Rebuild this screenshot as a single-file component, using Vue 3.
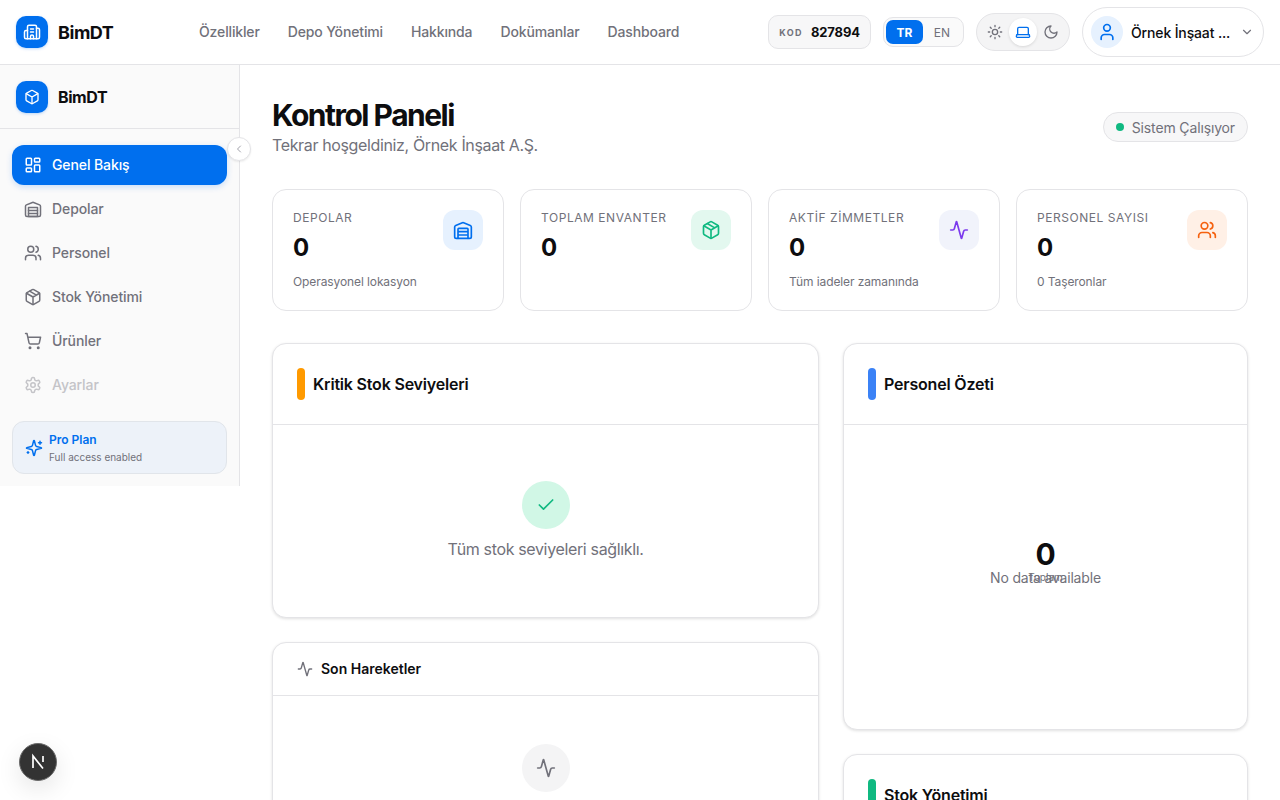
<template>
  <div class="app">
    <header class="topbar">
      <div class="brand">
        <span class="logo">
          <svg viewBox="0 0 24 24" class="ic-18"><path d="M10 12h4M10 8h4M14 21v-3a2 2 0 0 0-4 0v3" /><path d="M6 10H4a2 2 0 0 0-2 2v7a2 2 0 0 0 2 2h16a2 2 0 0 0 2-2V9a2 2 0 0 0-2-2h-2" /><path d="M6 21V5a2 2 0 0 1 2-2h8a2 2 0 0 1 2 2v16" /></svg>
        </span>
        <span class="brand-name">BimDT</span>
      </div>
      <nav class="topnav">
        <a v-for="link in links" :key="link">{{ link }}</a>
      </nav>
      <div class="tools">
        <div class="code"><span class="code-label">KOD</span><span class="code-value">827894</span></div>
        <div class="lang"><span class="lang-on">TR</span><span class="lang-off">EN</span></div>
        <div class="theme">
          <span class="theme-btn">
            <svg viewBox="0 0 24 24" class="ic-16"><circle cx="12" cy="12" r="4" /><path d="M12 2v2M12 20v2M4.9 4.9l1.4 1.4M17.7 17.7l1.4 1.4M2 12h2M20 12h2M6.3 17.7l-1.4 1.4M19.1 4.9l-1.4 1.4" /></svg>
          </span>
          <span class="theme-btn active">
            <svg viewBox="0 0 24 24" class="ic-16"><path d="M20 16V7a2 2 0 0 0-2-2H6a2 2 0 0 0-2 2v9" /><path d="M2.5 16h19l.4 2a1.5 1.5 0 0 1-1.4 2h-17A1.5 1.5 0 0 1 2.1 18Z" /></svg>
          </span>
          <span class="theme-btn">
            <svg viewBox="0 0 24 24" class="ic-16"><path d="M12 3a6 6 0 0 0 9 9 9 9 0 1 1-9-9Z" /></svg>
          </span>
        </div>
        <div class="user">
          <span class="avatar">
            <svg viewBox="0 0 24 24" class="ic-20"><path d="M19 21v-2a4 4 0 0 0-4-4H9a4 4 0 0 0-4 4v2" /><circle cx="12" cy="7" r="4" /></svg>
          </span>
          <span class="user-name">Örnek İnşaat ...</span>
          <svg viewBox="0 0 24 24" class="ic-14 chevron"><path d="m6 9 6 6 6-6" /></svg>
        </div>
      </div>
    </header>

    <div class="body">
      <aside class="sidebar">
        <div class="side-brand">
          <span class="logo">
            <svg viewBox="0 0 24 24" class="ic-16"><path d="M21 8a2 2 0 0 0-1-1.73l-7-4a2 2 0 0 0-2 0l-7 4A2 2 0 0 0 3 8v8a2 2 0 0 0 1 1.73l7 4a2 2 0 0 0 2 0l7-4A2 2 0 0 0 21 16Z" /><path d="m3.3 7 8.7 5 8.7-5M12 22V12" /></svg>
          </span>
          <span class="side-name">BimDT</span>
        </div>
        <button class="collapse">
          <svg viewBox="0 0 24 24" class="ic-12"><path d="m15 18-6-6 6-6" /></svg>
        </button>
        <nav class="side-nav">
          <a class="side-link active">
            <svg viewBox="0 0 24 24" class="ic-18"><rect x="3" y="3" width="7" height="9" rx="1" /><rect x="14" y="3" width="7" height="5" rx="1" /><rect x="14" y="12" width="7" height="9" rx="1" /><rect x="3" y="16" width="7" height="5" rx="1" /></svg>
            <span>Genel Bakış</span>
          </a>
          <a class="side-link">
            <svg viewBox="0 0 24 24" class="ic-18"><path d="M22 8.35V20a2 2 0 0 1-2 2H4a2 2 0 0 1-2-2V8.35A2 2 0 0 1 3.26 6.5l8-3.2a2 2 0 0 1 1.48 0l8 3.2A2 2 0 0 1 22 8.35Z" /><path d="M6 18h12M6 14h12" /><rect x="6" y="10" width="12" height="12" /></svg>
            <span>Depolar</span>
          </a>
          <a class="side-link">
            <svg viewBox="0 0 24 24" class="ic-18"><path d="M16 21v-2a4 4 0 0 0-4-4H6a4 4 0 0 0-4 4v2" /><circle cx="9" cy="7" r="4" /><path d="M22 21v-2a4 4 0 0 0-3-3.87M16 3.13a4 4 0 0 1 0 7.75" /></svg>
            <span>Personel</span>
          </a>
          <a class="side-link">
            <svg viewBox="0 0 24 24" class="ic-18"><path d="M21 8a2 2 0 0 0-1-1.73l-7-4a2 2 0 0 0-2 0l-7 4A2 2 0 0 0 3 8v8a2 2 0 0 0 1 1.73l7 4a2 2 0 0 0 2 0l7-4A2 2 0 0 0 21 16Z" /><path d="m3.3 7 8.7 5 8.7-5M12 22V12M7.5 4.27l9 5.15" /></svg>
            <span>Stok Yönetimi</span>
          </a>
          <a class="side-link">
            <svg viewBox="0 0 24 24" class="ic-18"><circle cx="8" cy="21" r="1" /><circle cx="19" cy="21" r="1" /><path d="M2.05 2.05h2l2.66 12.42a2 2 0 0 0 2 1.58h9.78a2 2 0 0 0 1.95-1.57l1.65-7.43H5.12" /></svg>
            <span>Ürünler</span>
          </a>
          <a class="side-link muted">
            <svg viewBox="0 0 24 24" class="ic-18"><path d="M12.22 2h-.44a2 2 0 0 0-2 2v.18a2 2 0 0 1-1 1.73l-.43.25a2 2 0 0 1-2 0l-.15-.08a2 2 0 0 0-2.73.73l-.22.38a2 2 0 0 0 .73 2.73l.15.1a2 2 0 0 1 1 1.72v.51a2 2 0 0 1-1 1.74l-.15.09a2 2 0 0 0-.73 2.73l.22.38a2 2 0 0 0 2.73.73l.15-.08a2 2 0 0 1 2 0l.43.25a2 2 0 0 1 1 1.73V20a2 2 0 0 0 2 2h.44a2 2 0 0 0 2-2v-.18a2 2 0 0 1 1-1.73l.43-.25a2 2 0 0 1 2 0l.15.08a2 2 0 0 0 2.73-.73l.22-.39a2 2 0 0 0-.73-2.73l-.15-.08a2 2 0 0 1-1-1.74v-.5a2 2 0 0 1 1-1.74l.15-.09a2 2 0 0 0 .73-2.73l-.22-.38a2 2 0 0 0-2.73-.73l-.15.08a2 2 0 0 1-2 0l-.43-.25a2 2 0 0 1-1-1.73V4a2 2 0 0 0-2-2Z" /><circle cx="12" cy="12" r="3" /></svg>
            <span>Ayarlar</span>
          </a>
        </nav>
        <div class="plan">
          <svg viewBox="0 0 24 24" class="ic-18 plan-icon"><path d="M9.94 15.5A2 2 0 0 0 8.5 14.06l-6.14-1.58a.5.5 0 0 1 0-.96L8.5 9.94A2 2 0 0 0 9.94 8.5l1.58-6.14a.5.5 0 0 1 .96 0l1.58 6.14a2 2 0 0 0 1.44 1.44l6.14 1.58a.5.5 0 0 1 0 .96l-6.14 1.58a2 2 0 0 0-1.44 1.44l-1.58 6.14a.5.5 0 0 1-.96 0Z" /><path d="M20 3v4M22 5h-4M4 17v2M5 18H3" /></svg>
          <div>
            <div class="plan-name">Pro Plan</div>
            <div class="plan-sub">Full access enabled</div>
          </div>
        </div>
      </aside>

      <main class="main">
        <div class="page-head">
          <div>
            <h1>Kontrol Paneli</h1>
            <p>Tekrar hoşgeldiniz, Örnek İnşaat A.Ş.</p>
          </div>
          <div class="status"><i></i>Sistem Çalışıyor</div>
        </div>

        <section class="stats">
          <div v-for="s in stats" :key="s.label" class="stat">
            <div class="stat-text">
              <div class="stat-label">{{ s.label }}</div>
              <div class="stat-value">0</div>
              <div class="stat-sub">{{ s.sub }}</div>
            </div>
            <span class="stat-icon" :class="s.tone">
              <svg viewBox="0 0 24 24" class="ic-20"><path v-for="d in s.paths" :key="d" :d="d" /></svg>
            </span>
          </div>
        </section>

        <section class="columns">
          <div class="col">
            <div class="panel critical">
              <div class="panel-head tall">
                <span class="bar orange"></span>
                <h2>Kritik Stok Seviyeleri</h2>
              </div>
              <div class="empty ok">
                <span class="round green">
                  <svg viewBox="0 0 24 24" class="ic-20"><path d="M20 6 9 17l-5-5" /></svg>
                </span>
                <p>Tüm stok seviyeleri sağlıklı.</p>
              </div>
            </div>
            <div class="panel">
              <div class="panel-head short">
                <svg viewBox="0 0 24 24" class="ic-16 gray"><path d="M22 12h-2.48a2 2 0 0 0-1.93 1.46l-2.35 8.36a.25.25 0 0 1-.48 0L9.24 2.18a.25.25 0 0 0-.48 0l-2.35 8.36A2 2 0 0 1 4.49 12H2" /></svg>
                <h3>Son Hareketler</h3>
              </div>
              <div class="empty recent">
                <span class="round light">
                  <svg viewBox="0 0 24 24" class="ic-20 gray"><path d="M22 12h-2.48a2 2 0 0 0-1.93 1.46l-2.35 8.36a.25.25 0 0 1-.48 0L9.24 2.18a.25.25 0 0 0-.48 0l-2.35 8.36A2 2 0 0 1 4.49 12H2" /></svg>
                </span>
              </div>
            </div>
          </div>

          <div class="col">
            <div class="panel people">
              <div class="panel-head tall">
                <span class="bar blue"></span>
                <h2>Personel Özeti</h2>
              </div>
              <div class="chart">
                <span class="no-data">No data available</span>
                <div class="chart-center">
                  <strong>0</strong>
                  <small>Toplam</small>
                </div>
              </div>
            </div>
            <div class="panel">
              <div class="panel-head tall">
                <span class="bar green-bar"></span>
                <h2>Stok Yönetimi</h2>
              </div>
            </div>
          </div>
        </section>
      </main>
    </div>

    <button class="dev-badge">
      <svg viewBox="0 0 24 24" width="24" height="24"><path d="M7 18V6l10 12.5" /><path d="M17 6v6" /></svg>
    </button>
  </div>
</template>

<script setup>
const links = ['Özellikler', 'Depo Yönetimi', 'Hakkında', 'Dokümanlar', 'Dashboard']

const stats = [
  {
    label: 'DEPOLAR',
    sub: 'Operasyonel lokasyon',
    tone: 'blue',
    paths: [
      'M22 8.35V20a2 2 0 0 1-2 2H4a2 2 0 0 1-2-2V8.35A2 2 0 0 1 3.26 6.5l8-3.2a2 2 0 0 1 1.48 0l8 3.2A2 2 0 0 1 22 8.35Z',
      'M6 18h12M6 14h12M6 22V11a1 1 0 0 1 1-1h10a1 1 0 0 1 1 1v11'
    ]
  },
  {
    label: 'TOPLAM ENVANTER',
    sub: '',
    tone: 'green',
    paths: [
      'M21 8a2 2 0 0 0-1-1.73l-7-4a2 2 0 0 0-2 0l-7 4A2 2 0 0 0 3 8v8a2 2 0 0 0 1 1.73l7 4a2 2 0 0 0 2 0l7-4A2 2 0 0 0 21 16Z',
      'm3.3 7 8.7 5 8.7-5M12 22V12M7.5 4.27l9 5.15'
    ]
  },
  {
    label: 'AKTİF ZİMMETLER',
    sub: 'Tüm iadeler zamanında',
    tone: 'purple',
    paths: ['M22 12h-2.48a2 2 0 0 0-1.93 1.46l-2.35 8.36a.25.25 0 0 1-.48 0L9.24 2.18a.25.25 0 0 0-.48 0l-2.35 8.36A2 2 0 0 1 4.49 12H2']
  },
  {
    label: 'PERSONEL SAYISI',
    sub: '0 Taşeronlar',
    tone: 'orange',
    paths: [
      'M16 21v-2a4 4 0 0 0-4-4H6a4 4 0 0 0-4 4v2',
      'M13 7a4 4 0 1 1-8 0 4 4 0 0 1 8 0Z',
      'M22 21v-2a4 4 0 0 0-3-3.87M16 3.13a4 4 0 0 1 0 7.75'
    ]
  }
]
</script>

<style>
html, body {
  margin: 0;
  background: #fff;
  overflow: hidden;
}
</style>

<style scoped>
.app {
  height: 100vh;
  overflow: hidden;
  font-family: Inter, "Liberation Sans", sans-serif;
  color: #0d0d0f;
  position: relative;
}

svg {
  fill: none;
  stroke: currentColor;
  stroke-width: 2;
  stroke-linecap: round;
  stroke-linejoin: round;
  flex: none;
}
.ic-12 { width: 12px; height: 12px; }
.ic-14 { width: 14px; height: 14px; }
.ic-16 { width: 16px; height: 16px; }
.ic-18 { width: 18px; height: 18px; }
.ic-20 { width: 20px; height: 20px; }
.gray { color: #71717a; }

/* top bar */
.topbar {
  height: 64px;
  border-bottom: 1px solid #e4e4e7;
  display: flex;
  align-items: center;
  padding: 0 16px;
  background: #fff;
}
.brand {
  display: flex;
  align-items: center;
  gap: 10px;
  width: 183px;
}
.logo {
  width: 32px;
  height: 32px;
  border-radius: 10px;
  background: #006fee;
  color: #fff;
  display: flex;
  align-items: center;
  justify-content: center;
  box-shadow: 0 1px 3px rgba(0, 111, 238, 0.25);
}
.brand-name {
  font-size: 18px;
  font-weight: 700;
  letter-spacing: -0.45px;
}
.topnav {
  display: flex;
  gap: 28px;
  font-size: 14px;
  letter-spacing: -0.14px;
  line-height: 20px;
  margin-top: -1px;
  color: #71717a;
  font-weight: 500;
}
.tools {
  margin-left: auto;
  display: flex;
  align-items: center;
}
.code {
  height: 32px;
  padding: 0 10px;
  display: flex;
  align-items: center;
  gap: 8px;
  border: 1px solid #e4e4e7;
  border-radius: 10px;
  background: #f7f7f8;
  margin-right: 12px;
}
.code-label {
  font-size: 9px;
  font-weight: 700;
  letter-spacing: 1.35px;
  color: #71717a;
}
.code-value {
  font-size: 13px;
  font-weight: 700;
  letter-spacing: -0.1px;
}
.lang {
  padding: 2px;
  display: flex;
  align-items: center;
  border: 1px solid #e4e4e7;
  border-radius: 10px;
  background: #fafafa;
  margin-right: 12px;
  height: 24px;
}
.lang span {
  height: 24px;
  display: flex;
  align-items: center;
  justify-content: center;
  font-size: 12px;
  border-radius: 7px;
}
.lang-on {
  width: 37px;
  background: #006fee;
  color: #fff;
  font-weight: 700;
}
.lang-off {
  width: 38px;
  color: #71717a;
  font-weight: 400;
}
.theme {
  height: 36px;
  padding: 0 4px;
  display: flex;
  align-items: center;
  border: 1px solid #e4e4e7;
  border-radius: 19px;
  background: #f4f4f5;
  margin-right: 12px;
}
.theme-btn {
  width: 28px;
  height: 28px;
  border-radius: 50%;
  display: flex;
  align-items: center;
  justify-content: center;
  color: #71717a;
}
.theme-btn.active {
  background: #fff;
  color: #006fee;
  box-shadow: 0 1px 3px rgba(0, 0, 0, 0.12);
}
.user {
  width: 182px;
  height: 50px;
  box-sizing: border-box;
  padding: 0 9px 0 8px;
  display: flex;
  align-items: center;
  border: 1px solid #e4e4e7;
  border-radius: 25px;
}
.avatar {
  width: 32px;
  height: 32px;
  border-radius: 50%;
  background: #e6f1fe;
  color: #006fee;
  display: flex;
  align-items: center;
  justify-content: center;
  margin-right: 8px;
}
.user-name {
  font-size: 14px;
  letter-spacing: -0.14px;
  font-weight: 500;
}
.chevron {
  margin-left: auto;
  color: #71717a;
}

/* layout */
.body {
  display: flex;
  align-items: flex-start;
}
.sidebar {
  width: 240px;
  box-sizing: border-box;
  flex: none;
  background: #fafafa;
  border-right: 1px solid #e4e4e7;
  position: relative;
  height: 421px;
}
.side-brand {
  height: 63px;
  padding: 0 16px;
  display: flex;
  align-items: center;
  gap: 10px;
  border-bottom: 1px solid #e4e4e7;
}
.side-name {
  font-size: 16px;
  font-weight: 700;
  letter-spacing: -0.4px;
}
.collapse {
  position: absolute;
  top: 72px;
  right: -12px;
  width: 24px;
  height: 24px;
  padding: 0;
  border: 1px solid #e4e4e7;
  border-radius: 50%;
  background: #fff;
  color: #a1a1aa;
  display: flex;
  align-items: center;
  justify-content: center;
  box-shadow: 0 1px 2px rgba(0, 0, 0, 0.08);
}
.side-nav {
  padding: 16px 12px 0;
  display: flex;
  flex-direction: column;
  gap: 4px;
}
.side-link {
  height: 40px;
  padding: 0 12px;
  display: flex;
  align-items: center;
  gap: 10px;
  border-radius: 12px;
  font-size: 14px;
  letter-spacing: -0.1px;
  font-weight: 500;
  color: #71717a;
}
.side-link span {
  margin-top: -2px;
}
.side-link.active {
  background: #006fee;
  color: #fff;
  box-shadow: 0 2px 6px rgba(0, 111, 238, 0.2);
}
.side-link.muted {
  color: #c4c4c8;
}
.plan {
  margin: 16px 12px 0;
  height: 53px;
  box-sizing: border-box;
  padding: 0 12px;
  display: flex;
  align-items: center;
  gap: 6px;
  background: #edf2f9;
  border: 1px solid #e1e5ea;
  border-radius: 12px;
}
.plan-icon {
  color: #006fee;
}
.plan-name {
  font-size: 12px;
  font-weight: 600;
  color: #006fee;
  line-height: 16px;
}
.plan-sub {
  font-size: 10px;
  color: #71717a;
  line-height: 14px;
  margin-top: 2px;
}

/* main */
.main {
  flex: 1;
  min-width: 0;
  padding: 32px;
}
.page-head {
  display: flex;
  justify-content: space-between;
  align-items: center;
  margin-bottom: 32px;
}
h1 {
  margin: 0;
  padding-top: 1px;
  font-size: 30px;
  line-height: 35px;
  font-weight: 700;
  letter-spacing: -1.5px;
}
.page-head p {
  margin: 0;
  font-size: 16px;
  letter-spacing: -0.36px;
  line-height: 24px;
  color: #71717a;
}
.status {
  height: 30px;
  box-sizing: border-box;
  padding: 0 12px;
  display: flex;
  align-items: center;
  gap: 8px;
  border: 1px solid #e4e4e7;
  border-radius: 15px;
  background: #f7f7f8;
  font-size: 14px;
  letter-spacing: -0.14px;
  color: #71717a;
}
.status i {
  width: 8px;
  height: 8px;
  border-radius: 50%;
  background: #10b981;
}

.stats {
  display: grid;
  grid-template-columns: repeat(4, 1fr);
  gap: 16px;
  margin-bottom: 32px;
}
.stat {
  height: 122px;
  box-sizing: border-box;
  padding: 20px;
  display: flex;
  justify-content: space-between;
  align-items: flex-start;
  background: #fff;
  border: 1px solid #e4e4e7;
  border-radius: 14px;
}
.stat-label {
  font-size: 12px;
  line-height: 16px;
  letter-spacing: 0.55px;
  font-weight: 400;
  color: #71717a;
}
.stat-value {
  font-size: 24px;
  line-height: 32px;
  font-weight: 700;
  margin-top: 6px;
}
.stat-sub {
  font-size: 12px;
  letter-spacing: -0.1px;
  line-height: 16px;
  min-height: 16px;
  color: #71717a;
  margin-top: 10px;
}
.stat-icon {
  width: 40px;
  height: 40px;
  border-radius: 12px;
  display: flex;
  align-items: center;
  justify-content: center;
}
.stat-icon.blue { background: #e6f1fe; color: #006fee; }
.stat-icon.green { background: #e3f8ef; color: #10b981; }
.stat-icon.purple { background: #f1f3fb; color: #7c3aed; }
.stat-icon.orange { background: #fff0e6; color: #f5610f; }

.columns {
  display: grid;
  grid-template-columns: 547px 405px;
  gap: 24px;
}
.col {
  display: flex;
  flex-direction: column;
  gap: 24px;
}
.panel {
  background: #fff;
  border: 1px solid #e4e4e7;
  border-radius: 14px;
  box-shadow: 0 1px 3px rgba(0, 0, 0, 0.12);
}
.panel-head {
  display: flex;
  align-items: center;
  padding: 0 24px;
  border-bottom: 1px solid #e4e4e7;
  box-sizing: border-box;
}
.panel-head.tall {
  height: 81px;
  gap: 8px;
}
.panel-head.short {
  height: 53px;
  gap: 8px;
}
.bar {
  width: 8px;
  height: 32px;
  border-radius: 4px;
}
.bar.orange { background: #ff9a00; }
.bar.blue { background: #3b82f6; }
.bar.green-bar { background: #10b981; }
h2 {
  margin: 0;
  font-size: 16px;
  letter-spacing: -0.19px;
  font-weight: 600;
}
h3 {
  margin: 0 0 2px;
  font-size: 14px;
  font-weight: 600;
}
.critical {
  height: 275px;
  box-sizing: border-box;
}
.people {
  height: 387px;
  box-sizing: border-box;
}
.empty {
  display: flex;
  flex-direction: column;
  align-items: center;
  padding-top: 48px;
}
.empty.ok {
  padding-top: 56px;
}
.empty.recent {
  padding-bottom: 96px;
}
.round {
  width: 48px;
  height: 48px;
  border-radius: 50%;
  display: flex;
  align-items: center;
  justify-content: center;
}
.round.green { background: #d1f7e6; color: #10b981; }
.round.light { background: #f4f4f5; }
.empty p {
  margin: 8px 0 0;
  font-size: 16px;
  letter-spacing: -0.35px;
  line-height: 24px;
  color: #71717a;
}
.chart {
  position: relative;
  height: 305px;
  display: flex;
  align-items: center;
  justify-content: center;
}
.no-data {
  font-size: 14px;
  letter-spacing: -0.18px;
  color: #71717a;
}
.chart-center {
  position: absolute;
  top: 113px;
  left: 0;
  right: 0;
  display: flex;
  flex-direction: column;
  align-items: center;
}
.chart-center strong {
  font-size: 30px;
  line-height: 32px;
  font-weight: 700;
}
.chart-center small {
  font-size: 10px;
  line-height: 14px;
  color: #71717a;
}

.dev-badge {
  position: absolute;
  left: 19px;
  top: 743px;
  width: 38px;
  height: 38px;
  padding: 0;
  border: 1px solid #6b6b6b;
  border-radius: 50%;
  background: #333;
  color: #fff;
  display: flex;
  align-items: center;
  justify-content: center;
  box-shadow: 0 8px 24px rgba(0, 0, 0, 0.1);
}
.dev-badge svg {
  stroke-width: 1.7;
  stroke-linecap: butt;
  stroke-linejoin: miter;
}
</style>
